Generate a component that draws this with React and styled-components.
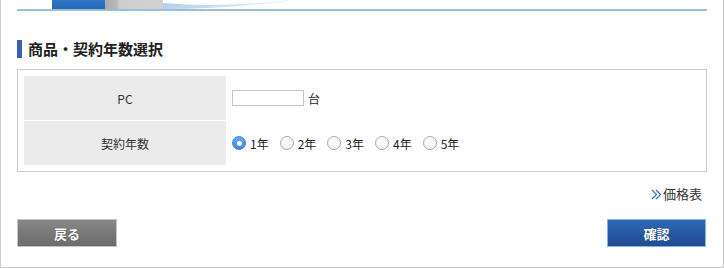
import React, { useState } from "react";
import styled, { createGlobalStyle } from "styled-components";

const GlobalStyle = createGlobalStyle`
  html, body {
    margin: 0;
    padding: 0;
    background: #fff;
  }
  body {
    font-family: "Noto Sans CJK JP", "Noto Sans", sans-serif;
    color: #333;
  }
`;

const Frame = styled.div`
  box-sizing: border-box;
  width: 724px;
  height: 268px;
  border: 1px solid #cbcbcb;
  border-top: none;
  padding: 0 16px;
  display: flex;
  flex-direction: column;
`;

const Header = styled.div`
  display: flex;
  flex-direction: column;
`;

const TabStrip = styled.div`
  display: flex;
  height: 9px;
  padding-left: 35px;
`;

const TabBlock = styled.div`
  width: ${(p) => p.$w}px;
  height: 100%;
  background: ${(p) => p.$bg};
`;

const Rule = styled.div`
  height: 2px;
  background: #9cc0d3;
`;

const Heading = styled.h2`
  margin: 29px 0 0;
  height: 18px;
  line-height: 18px;
  border-left: 5px solid #3b5fb3;
  padding-left: 6px;
  font-size: 15px;
  font-weight: bold;
  color: #222;
`;

const Box = styled.div`
  margin-top: 11px;
  border: 1px solid #cccccc;
  padding: 6px;
  display: grid;
  grid-template-columns: 202px 1fr;
  row-gap: 1px;
`;

const LabelCell = styled.div`
  height: 44px;
  background: #ebebeb;
  display: flex;
  align-items: center;
  justify-content: center;
  font-size: 12px;
  color: #333;
`;

const ValueCell = styled.div`
  height: 44px;
  display: flex;
  align-items: center;
  padding-left: 6px;
  font-size: 12px;
  color: #222;
`;

const QtyInput = styled.input`
  box-sizing: border-box;
  width: 72px;
  height: 16px;
  border: 1px solid #c6c6c6;
  margin: 0 4px 0 0;
  padding: 0 2px;
  font-size: 12px;
  outline: none;
`;

const RadioGroup = styled.div`
  display: flex;
  align-items: center;
  gap: 11px;
`;

const RadioLabel = styled.label`
  display: flex;
  align-items: center;
  gap: 4px;
  cursor: pointer;
  font-size: 12px;
  color: #222;
`;

const RadioDot = styled.span`
  box-sizing: border-box;
  width: 14px;
  height: 14px;
  border-radius: 50%;
  border: 1px solid ${(p) => (p.$on ? "#3f86e6" : "#a9a9a9")};
  background: ${(p) =>
    p.$on ? "linear-gradient(#66a6f2, #3f84e4)" : "linear-gradient(#fff, #f1f1f1)"};
  display: flex;
  align-items: center;
  justify-content: center;
  &::after {
    content: "";
    width: 5px;
    height: 5px;
    border-radius: 50%;
    background: #fff;
    display: ${(p) => (p.$on ? "block" : "none")};
  }
`;

const LinkRow = styled.div`
  margin-top: 14px;
  display: flex;
  justify-content: flex-end;
  padding-right: 5px;
`;

const PriceLink = styled.a`
  display: flex;
  align-items: center;
  gap: 1px;
  font-size: 13px;
  line-height: 16px;
  color: #333;
  text-decoration: none;
  cursor: pointer;
`;

const ButtonRow = styled.div`
  margin-top: 17px;
  display: flex;
  justify-content: space-between;
`;

const ActionButton = styled.button`
  box-sizing: border-box;
  width: ${(p) => (p.$primary ? 99 : 100)}px;
  height: 28px;
  margin-right: ${(p) => (p.$primary ? 1 : 0)}px;
  border: 1px solid ${(p) => (p.$primary ? "#86b4e6" : "#c4c4c4")};
  background: ${(p) =>
    p.$primary
      ? "linear-gradient(#3168b3, #2558a3 55%, #204c92)"
      : "linear-gradient(#878787, #777 55%, #6c6c6c)"};
  color: #fff;
  font-family: "Noto Sans CJK JP", sans-serif;
  font-size: 13px;
  font-weight: bold;
  text-shadow: 0 0 1px rgba(0, 0, 0, 0.4);
  cursor: pointer;
  padding: 0;
`;

const years = ["1年", "2年", "3年", "4年", "5年"];

export default function App() {
  const [year, setYear] = useState(0);

  return (
    <>
      <GlobalStyle />
      <Frame>
        <Header>
          <TabStrip>
            <TabBlock $w={53} $bg="linear-gradient(#3075c6, #2467b8)" />
            <TabBlock $w={58} $bg="linear-gradient(90deg, #a9a9a9 0, #b9b9b9 20%, #cdcdcd 25%, #d2d2d2 100%)" />
            <svg width="125" height="9" viewBox="0 0 125 9">
              <defs>
                <linearGradient id="sw" x1="0" x2="1" y1="0" y2="0">
                  <stop offset="0" stopColor="#b4d0ea" />
                  <stop offset="0.5" stopColor="#cfe0f0" />
                  <stop offset="1" stopColor="#e8f0f8" />
                </linearGradient>
              </defs>
              <path d="M0 3 Q60 8 125 0 L125 1 Q60 9 0 9 Z" fill="url(#sw)" />
            </svg>
          </TabStrip>
          <Rule />
        </Header>

        <Heading>商品・契約年数選択</Heading>

        <Box>
          <LabelCell>PC</LabelCell>
          <ValueCell>
            <QtyInput type="text" />台
          </ValueCell>
          <LabelCell>契約年数</LabelCell>
          <ValueCell>
            <RadioGroup>
              {years.map((y, i) => (
                <RadioLabel key={y} onClick={() => setYear(i)}>
                  <RadioDot $on={i === year} />
                  {y}
                </RadioLabel>
              ))}
            </RadioGroup>
          </ValueCell>
        </Box>

        <LinkRow>
          <PriceLink>
            <svg width="11" height="11" viewBox="0 0 11 11">
              <path d="M1 1 L5.5 5.5 L1 10 M5 1 L9.5 5.5 L5 10" fill="none" stroke="#3a6fc2" strokeWidth="1.2" />
            </svg>
            価格表
          </PriceLink>
        </LinkRow>

        <ButtonRow>
          <ActionButton>戻る</ActionButton>
          <ActionButton $primary>確認</ActionButton>
        </ButtonRow>
      </Frame>
    </>
  );
}
